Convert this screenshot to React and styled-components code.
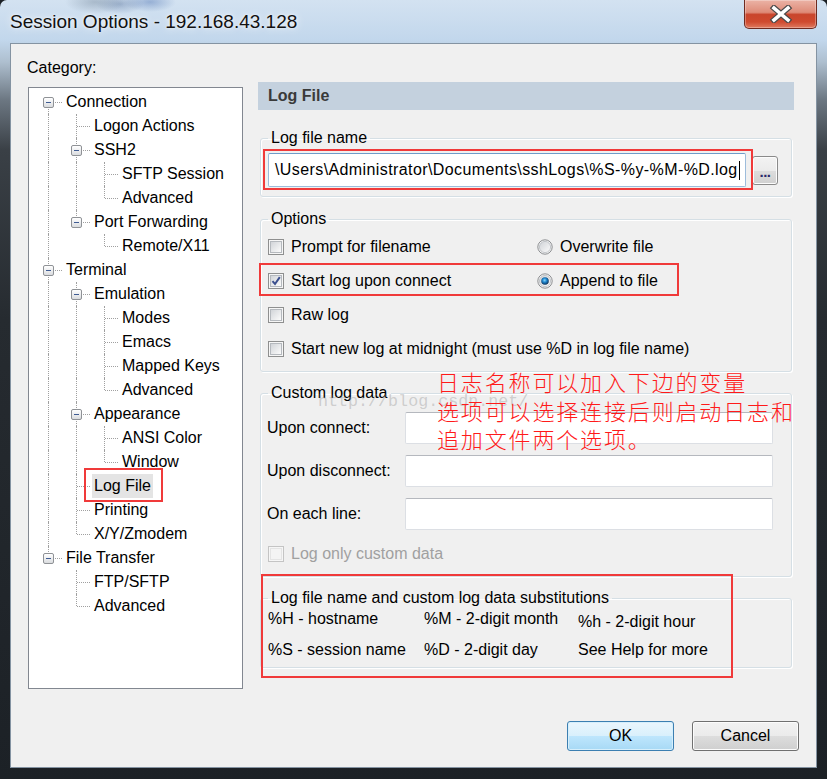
import React from 'react';
import styled, { createGlobalStyle } from 'styled-components';

const GlobalStyle = createGlobalStyle`
  html, body { margin: 0; padding: 0; background: #1b2025; }
  body {
    font-family: "Liberation Sans", Arial, sans-serif;
    font-size: 16px;
    color: #000;
  }
  * { box-sizing: border-box; }
`;

const Frame = styled.div`
  width: 827px;
  height: 779px;
  display: flex;
  flex-direction: column;
  border-radius: 7px 7px 0 0;
  overflow: hidden;
  background:
    radial-gradient(ellipse 30px 12px at 95px 2px, rgba(90, 110, 130, 0.35), transparent),
    radial-gradient(ellipse 24px 10px at 120px 4px, rgba(60, 90, 140, 0.35), transparent),
    radial-gradient(ellipse 26px 10px at 150px 2px, rgba(60, 100, 170, 0.4), transparent),
    linear-gradient(#d3e2f1 0px, #c2d7ec 40px, #aebfcf 62px, #6c7782 100px, #3a4046 150px, #262b30 320px, #1c2126 100%);
`;

const TitleBar = styled.div`
  height: 43px;
  display: flex;
  align-items: flex-start;
`;

const Title = styled.div`
  padding-left: 10px;
  font-size: 19px;
  line-height: 44px;
  color: #111;
  text-shadow: 0 0 8px rgba(255, 255, 255, 0.95), 0 0 3px rgba(255, 255, 255, 0.8);
`;

const CloseButton = styled.div`
  width: 73px;
  height: 29px;
  margin: 0 10px 0 auto;
  border: 1px solid #6e2a20;
  border-top: none;
  border-radius: 0 0 5px 5px;
  background: linear-gradient(#ebb3a6 0%, #de8b78 44%, #c9452c 52%, #cf4a2f 78%, #df7a5f 100%);
  box-shadow: inset 0 0 0 1px rgba(255, 255, 255, 0.3);
  display: flex;
  align-items: center;
  justify-content: center;
`;

const Client = styled.div`
  flex: 1;
  margin: 0 10px 11px 10px;
  background: #f0f0f0;
  border: 1px solid #8493a2;
  padding: 14px 17px 16px 16px;
  display: flex;
  flex-direction: column;
`;

const MainRow = styled.div`
  display: flex;
  gap: 15px;
  margin-right: 5px;
`;

const LeftCol = styled.div`
  width: 216px;
  display: flex;
  flex-direction: column;
`;

const CategoryLabel = styled.div`
  line-height: 20px;
  height: 20px;
`;

const TreeBox = styled.div`
  margin: 9px 0 0 1px;
  width: 215px;
  height: 602px;
  border: 1px solid #828790;
  background: #fff;
  padding: 2px 0 0 5px;
`;

const TreeRow = styled.div`
  display: flex;
  height: 24px;
`;

const Guide = styled.div`
  width: 28px;
  position: relative;
  &::before {
    content: '';
    display: ${(p) => (p.$line ? 'block' : 'none')};
    position: absolute;
    left: 14px;
    top: 0;
    bottom: 0;
    border-left: 1px dotted #a0a0a0;
  }
`;

const Connector = styled.div`
  width: 28px;
  position: relative;
  &::before {
    content: '';
    position: absolute;
    left: 14px;
    top: ${(p) => (p.$first ? '12px' : '0')};
    bottom: ${(p) => (p.$last ? '12px' : '0')};
    border-left: 1px dotted #a0a0a0;
  }
  &::after {
    content: '';
    position: absolute;
    left: 15px;
    right: 0;
    top: 12px;
    border-top: 1px dotted #a0a0a0;
  }
`;

const Expander = styled.span`
  position: absolute;
  z-index: 1;
  left: 9px;
  top: 7px;
  width: 11px;
  height: 11px;
  border: 1px solid #8f9296;
  border-radius: 2px;
  background: linear-gradient(#ffffff, #dadcdf);
  &::after {
    content: '';
    position: absolute;
    left: 2px;
    right: 2px;
    top: 4px;
    height: 1px;
    background: #3f5c93;
  }
`;

const TreeLabel = styled.span`
  position: relative;
  margin-left: 2px;
  padding: 0 2px;
  line-height: 24px;
  height: 24px;
  white-space: nowrap;
  background: ${(p) => (p.$selected ? '#e4e4e4' : 'transparent')};
`;

const Annot = styled.span`
  position: absolute;
  left: ${(p) => p.$l}px;
  top: ${(p) => p.$t}px;
  width: ${(p) => p.$w}px;
  height: ${(p) => p.$h}px;
  border: 2px solid #f03a3a;
  pointer-events: none;
  z-index: 3;
`;

const RightCol = styled.div`
  width: 536px;
  padding-top: 24px;
  position: relative;
`;

const Header = styled.div`
  height: 28px;
  background: #c4d1de;
  padding-left: 10px;
  font-weight: bold;
  line-height: 28px;
  color: #3a3a3a;
`;

const Group = styled.fieldset`
  margin: ${(p) => p.$mt}px 2px 0;
  padding: ${(p) => p.$pad};
  border: 1px solid #d5dfe5;
  border-radius: 3px;
  box-shadow: inset 1px 1px 0 #fff, 1px 1px 0 #fff;
  min-width: 0;
`;

const Legend = styled.legend`
  padding: 0 3px;
  line-height: 20px;
`;

const FileRow = styled.div`
  display: flex;
  align-items: center;
  gap: 6px;
  position: relative;
`;

const TextField = styled.div`
  width: ${(p) => p.$w}px;
  height: ${(p) => p.$h}px;
  background: #fff;
  border: 1px solid ${(p) => (p.$focus ? '#9dbcdb' : '#dcdfe4')};
  border-top-color: ${(p) => (p.$focus ? '#6f9cc9' : '#b5b8be')};
  border-radius: 2px;
  padding-left: 6px;
  display: flex;
  align-items: center;
  white-space: nowrap;
  overflow: hidden;
  letter-spacing: ${(p) => (p.$focus ? '0.4px' : '0')};
`;

const Caret = styled.span`
  display: inline-block;
  width: 1px;
  height: 19px;
  background: #000;
  margin-left: 1px;
`;

const SmallButton = styled.div`
  width: 26px;
  height: 29px;
  border: 1px solid #8a8a8a;
  border-radius: 3px;
  background: linear-gradient(#f3f3f3 0%, #ebebeb 50%, #dddddd 51%, #d0d0d0 100%);
  box-shadow: inset 0 0 0 1px #fcfcfc;
  text-align: center;
  line-height: 30px;
  font-weight: bold;
  font-size: 15px;
  color: #2a2a6a;
  letter-spacing: -0.5px;
`;

const Options = styled.div`
  display: flex;
  flex-direction: column;
  gap: 10px;
`;

const OptLine = styled.div`
  display: flex;
  height: 24px;
  position: relative;
`;

const OptItem = styled.label`
  display: flex;
  align-items: center;
  gap: 7px;
  width: ${(p) => (p.$w ? `${p.$w}px` : 'auto')};
  white-space: nowrap;
  color: ${(p) => (p.$disabled ? '#a0a0a0' : '#000')};
`;

const CheckBox = styled.span`
  width: 16px;
  height: 16px;
  flex: none;
  border: 1px solid ${(p) => (p.$disabled ? '#c4c4c4' : '#8e8f8f')};
  background: ${(p) =>
    p.$disabled ? '#f4f4f4' : 'linear-gradient(135deg, #d2d5d9 15%, #fbfbfb 85%)'};
  box-shadow: inset 0 0 0 1px #f6f6f6, inset 0 0 0 2px ${(p) => (p.$disabled ? '#e4e4e4' : '#b5b9be')};
  display: flex;
  align-items: center;
  justify-content: center;
`;

const FieldGrid = styled.div`
  display: grid;
  grid-template-columns: 138px 368px;
  grid-auto-rows: 32px;
  row-gap: 11px;
  align-items: center;
`;

const CustomCheck = styled(OptLine)`
  margin-top: 12px;
`;

const SubstWrap = styled.div`
  position: relative;
`;

const SubstGrid = styled.div`
  display: grid;
  grid-template-columns: 156px 154px 1fr;
  grid-auto-rows: 20px;
  row-gap: 11px;
  line-height: 20px;
  white-space: nowrap;
`;

const Subst = styled.span`
  margin-top: ${(p) => p.$dy || 0}px;
`;

const Note = styled.div`
  position: absolute;
  left: 179px;
  top: 309px;
  z-index: 2;
  font-family: "Noto Sans CJK SC", sans-serif;
  font-weight: 300;
  font-size: 22px;
  letter-spacing: 1.85px;
  line-height: 28.5px;
  color: #ff1a1a;
  white-space: nowrap;
`;

const Watermark = styled.div`
  position: absolute;
  left: 60px;
  top: 334px;
  z-index: 1;
  font-family: "Liberation Mono", monospace;
  font-size: 16.7px;
  line-height: 20px;
  color: rgba(150, 150, 150, 0.4);
  white-space: nowrap;
`;

const Footer = styled.div`
  display: flex;
  justify-content: flex-end;
  gap: 18px;
  margin-top: 32px;
`;

const Button = styled.div`
  width: 107px;
  height: 30px;
  border: 1px solid ${(p) => (p.$primary ? '#3c7fb1' : '#707070')};
  border-radius: 3px;
  background: ${(p) =>
    p.$primary
      ? 'linear-gradient(#eaf6fd 0%, #d9f0fc 50%, #bee6fd 51%, #a7d9f5 100%)'
      : 'linear-gradient(#f2f2f2 0%, #ebebeb 50%, #dddddd 51%, #cfcfcf 100%)'};
  box-shadow: inset 0 0 0 1px ${(p) => (p.$primary ? '#d6effc' : '#fcfcfc')};
  text-align: center;
  line-height: 28px;
`;

const tree = [
  { label: 'Connection', guides: [], box: true, first: true },
  { label: 'Logon Actions', guides: [true] },
  { label: 'SSH2', guides: [true], box: true },
  { label: 'SFTP Session', guides: [true, true] },
  { label: 'Advanced', guides: [true, true], last: true },
  { label: 'Port Forwarding', guides: [true], box: true, last: true },
  { label: 'Remote/X11', guides: [true, false], last: true },
  { label: 'Terminal', guides: [], box: true },
  { label: 'Emulation', guides: [true], box: true },
  { label: 'Modes', guides: [true, true] },
  { label: 'Emacs', guides: [true, true] },
  { label: 'Mapped Keys', guides: [true, true] },
  { label: 'Advanced', guides: [true, true], last: true },
  { label: 'Appearance', guides: [true], box: true },
  { label: 'ANSI Color', guides: [true, true] },
  { label: 'Window', guides: [true, true], last: true },
  { label: 'Log File', guides: [true], selected: true },
  { label: 'Printing', guides: [true] },
  { label: 'X/Y/Zmodem', guides: [true], last: true },
  { label: 'File Transfer', guides: [], box: true, last: true },
  { label: 'FTP/SFTP', guides: [false] },
  { label: 'Advanced', guides: [false], last: true },
];

function Check({ checked, disabled }) {
  return (
    <CheckBox $disabled={disabled}>
      {checked && (
        <svg width="12" height="12" viewBox="0 0 12 12">
          <path d="M2.5 6.2 L5 9 L9.8 2.2" fill="none" stroke="#3b4f8e" strokeWidth="2" />
        </svg>
      )}
    </CheckBox>
  );
}

function Radio({ checked }) {
  return (
    <svg width="16" height="16" viewBox="0 0 16 16" style={{ flex: 'none' }}>
      <defs>
        <linearGradient id="rbg" x1="0" y1="0" x2="1" y2="1">
          <stop offset="0" stopColor="#d0d3d7" />
          <stop offset="1" stopColor="#fbfbfb" />
        </linearGradient>
        <radialGradient id="rsel" cx="0.45" cy="0.4" r="0.6">
          <stop offset="0" stopColor="#8ad6f7" />
          <stop offset="0.45" stopColor="#1e86cf" />
          <stop offset="1" stopColor="#0c2f55" />
        </radialGradient>
      </defs>
      <circle cx="8" cy="8" r="7.2" fill="#f6f6f6" stroke="#8c8e91" />
      <circle cx="8" cy="8" r="5.6" fill="url(#rbg)" stroke="#b7bbc0" strokeWidth="0.8" />
      {checked && <circle cx="8" cy="8" r="3.8" fill="url(#rsel)" />}
    </svg>
  );
}

function Tree() {
  return (
    <TreeBox>
      {tree.map((n, i) => (
        <TreeRow key={i}>
          {n.guides.map((g, j) => (
            <Guide key={j} $line={g} />
          ))}
          <Connector $first={n.first} $last={n.last}>
            {n.box && <Expander />}
          </Connector>
          <TreeLabel $selected={n.selected}>
            {n.label}
            {n.selected && <Annot $l={-8} $t={-6} $w={79} $h={34} />}
          </TreeLabel>
        </TreeRow>
      ))}
    </TreeBox>
  );
}

export default function App() {
  return (
    <>
      <GlobalStyle />
      <Frame>
        <TitleBar>
          <Title>Session Options - 192.168.43.128</Title>
          <CloseButton>
            <svg width="24" height="18" viewBox="0 0 24 18">
              <path d="M5 3 L19 15 M19 3 L5 15" stroke="#4a4a4a" strokeWidth="6" strokeLinecap="square" />
              <path d="M5 3 L19 15 M19 3 L5 15" stroke="#fff" strokeWidth="3.6" strokeLinecap="square" />
            </svg>
          </CloseButton>
        </TitleBar>
        <Client>
          <MainRow>
            <LeftCol>
              <CategoryLabel>Category:</CategoryLabel>
              <Tree />
            </LeftCol>
            <RightCol>
              <Header>Log File</Header>

              <Group $mt={18} $pad="5px 13px 9px 7px">
                <Legend>Log file name</Legend>
                <FileRow>
                  <TextField $w={478} $h={34} $focus>
                    {'\\Users\\Administrator\\Documents\\sshLogs\\%S-%y-%M-%D.log'}
                    <Caret />
                  </TextField>
                  <SmallButton>...</SmallButton>
                  <Annot $l={-5} $t={-4} $w={490} $h={41} />
                </FileRow>
              </Group>

              <Group $mt={12} $pad="6px 13px 10px 7px">
                <Legend>Options</Legend>
                <Options>
                  <OptLine>
                    <OptItem $w={269}>
                      <Check />
                      Prompt for filename
                    </OptItem>
                    <OptItem>
                      <Radio />
                      Overwrite file
                    </OptItem>
                  </OptLine>
                  <OptLine>
                    <OptItem $w={269}>
                      <Check checked />
                      Start log upon connect
                    </OptItem>
                    <OptItem>
                      <Radio checked />
                      Append to file
                    </OptItem>
                    <Annot $l={-9} $t={-6} $w={420} $h={33} />
                  </OptLine>
                  <OptLine>
                    <OptItem>
                      <Check />
                      Raw log
                    </OptItem>
                  </OptLine>
                  <OptLine>
                    <OptItem>
                      <Check />
                      Start new log at midnight (must use %D in log file name)
                    </OptItem>
                  </OptLine>
                </Options>
              </Group>

              <Group $mt={11} $pad="9px 13px 10px 6px">
                <Legend style={{ marginLeft: 1 }}>Custom log data</Legend>
                <FieldGrid>
                  <span>Upon connect:</span>
                  <TextField $w={368} $h={32} />
                  <span>Upon disconnect:</span>
                  <TextField $w={368} $h={32} />
                  <span>On each line:</span>
                  <TextField $w={368} $h={32} />
                </FieldGrid>
                <CustomCheck>
                  <OptItem $disabled style={{ marginLeft: 1 }}>
                    <Check disabled />
                    Log only custom data
                  </OptItem>
                </CustomCheck>
              </Group>

              <SubstWrap>
                <Group $mt={11} $pad="1px 13px 7px 7px">
                  <Legend>Log file name and custom log data substitutions</Legend>
                  <SubstGrid>
                    <Subst>%H - hostname</Subst>
                    <Subst>%M - 2-digit month</Subst>
                    <Subst $dy={3}>%h - 2-digit hour</Subst>
                    <Subst>%S - session name</Subst>
                    <Subst>%D - 2-digit day</Subst>
                    <Subst>See Help for more</Subst>
                  </SubstGrid>
                </Group>
                <Annot $l={3} $t={-14} $w={472} $h={104} />
              </SubstWrap>

              <Watermark>http://blog.csdn.net/</Watermark>
              <Note>
                日志名称可以加入下边的变量
                <br />
                选项可以选择连接后则启动日志和
                <br />
                追加文件两个选项。
              </Note>
            </RightCol>
          </MainRow>
          <Footer>
            <Button $primary>OK</Button>
            <Button>Cancel</Button>
          </Footer>
        </Client>
      </Frame>
    </>
  );
}
